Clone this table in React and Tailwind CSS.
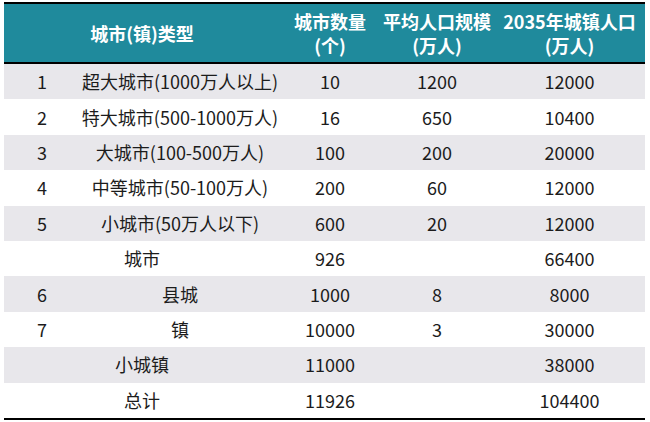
import React from "react";

const rows = [
  { n: "1", t: "超大城市(1000万人以上)", c: "10", a: "1200", p: "12000" },
  { n: "2", t: "特大城市(500-1000万人)", c: "16", a: "650", p: "10400" },
  { n: "3", t: "大城市(100-500万人)", c: "100", a: "200", p: "20000" },
  { n: "4", t: "中等城市(50-100万人)", c: "200", a: "60", p: "12000" },
  { n: "5", t: "小城市(50万人以下)", c: "600", a: "20", p: "12000" },
  { span: true, t: "城市", c: "926", a: "", p: "66400" },
  { n: "6", t: "县城", c: "1000", a: "8", p: "8000" },
  { n: "7", t: "镇", c: "10000", a: "3", p: "30000" },
  { span: true, t: "小城镇", c: "11000", a: "", p: "38000" },
  { span: true, t: "总计", c: "11926", a: "", p: "104400" },
];

export default function App() {
  return (
    <div
      className="w-[650px] h-[422px] bg-white pt-[2px] pl-[4px] overflow-hidden"
      style={{ fontFamily: '"Noto Sans CJK SC", "Noto Sans", sans-serif' }}
    >
      <div className="w-[641px] border-t-2 border-b-2 border-black">
        <div className="grid grid-cols-[276px_100px_114px_151px] h-[60px] bg-[#1f8a9c] text-white font-bold text-[18px] leading-[24px] border-b-2 border-black">
          <div className="flex items-center justify-center">城市(镇)类型</div>
          <div className="flex flex-col items-center justify-center">
            <span>城市数量</span>
            <span>(个)</span>
          </div>
          <div className="flex flex-col items-center justify-center">
            <span>平均人口规模</span>
            <span>(万人)</span>
          </div>
          <div className="flex flex-col items-center justify-center">
            <span>2035年城镇人口</span>
            <span>(万人)</span>
          </div>
        </div>
        {rows.map((r, i) => (
          <div
            key={i}
            className={
              "grid grid-cols-[76px_200px_100px_114px_151px] h-[35.4px] text-[18px] text-[#1c1c1c] " +
              (i % 2 === 0 ? "bg-[#e8e7eb]" : "bg-white")
            }
          >
            {r.span ? (
              <div className="col-span-2 flex items-center justify-center">{r.t}</div>
            ) : (
              <>
                <div className="flex items-center justify-center">{r.n}</div>
                <div className="flex items-center justify-center whitespace-nowrap">{r.t}</div>
              </>
            )}
            <div className="flex items-center justify-center">{r.c}</div>
            <div className="flex items-center justify-center">{r.a}</div>
            <div className="flex items-center justify-center">{r.p}</div>
          </div>
        ))}
      </div>
    </div>
  );
}
